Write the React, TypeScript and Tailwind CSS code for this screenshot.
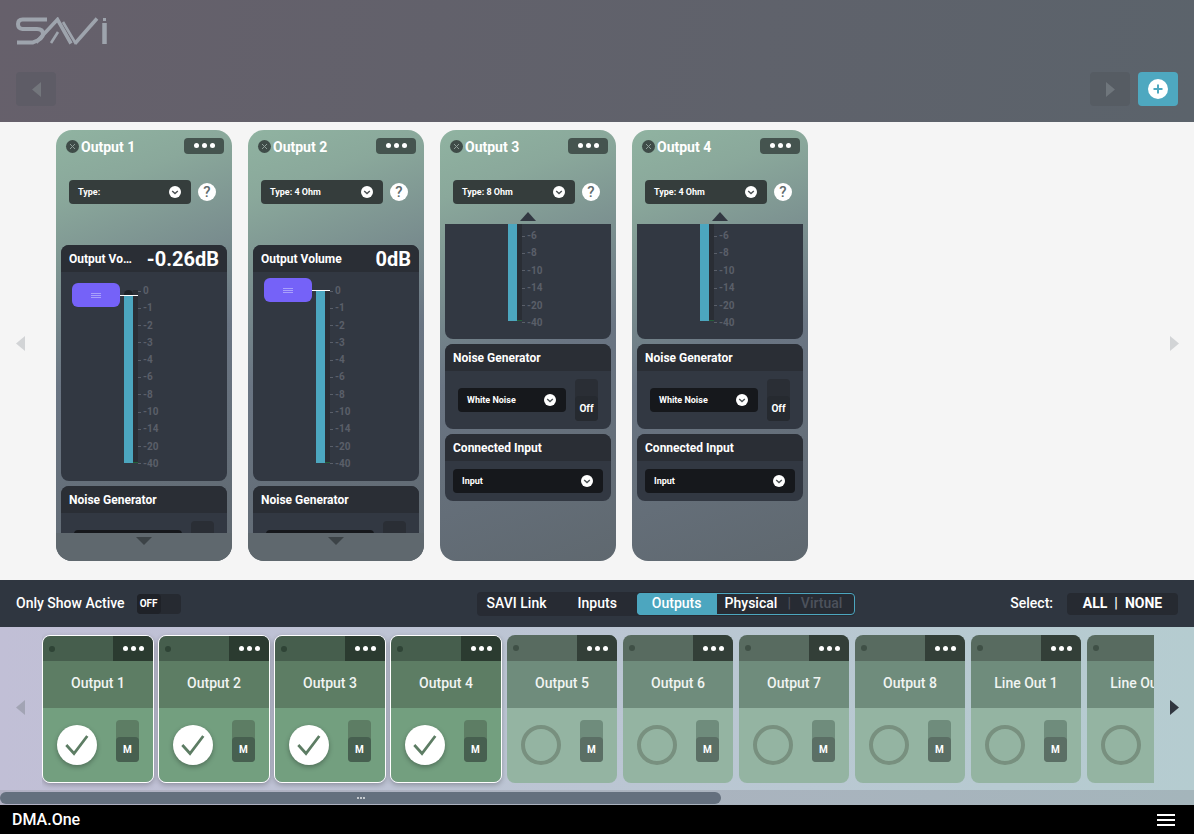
import React from "react";

const ticks = ["0", "-1", "-2", "-3", "-4", "-6", "-8", "-10", "-14", "-20", "-40"];
const scrolledTicks = ["-6", "-8", "-10", "-14", "-20", "-40"];

function Chevron({ size = 12 }: { size?: number }) {
  return (
    <svg width={size} height={size} viewBox="0 0 12 12" className="shrink-0">
      <circle cx="6" cy="6" r="6" fill="#fff" />
      <path d="M3.2 4.9 6 7.5l2.8-2.6" fill="none" stroke="#4a5053" strokeWidth="1.4" />
    </svg>
  );
}

function Dots() {
  return (
    <div className="flex gap-[3px]">
      <span className="w-[5px] h-[5px] rounded-full bg-white" />
      <span className="w-[5px] h-[5px] rounded-full bg-white" />
      <span className="w-[5px] h-[5px] rounded-full bg-white" />
    </div>
  );
}

function Tri({ dir, color, w = 10, h = 14 }: { dir: "l" | "r" | "u" | "d"; color: string; w?: number; h?: number }) {
  const pts = { l: `${w},0 ${w},${h} 0,${h / 2}`, r: `0,0 0,${h} ${w},${h / 2}`, u: `0,${h} ${w},${h} ${w / 2},0`, d: `0,0 ${w},0 ${w / 2},${h}` }[dir];
  return (
    <svg width={w} height={h} viewBox={`0 0 ${w} ${h}`} className="block shrink-0">
      <polygon points={pts} fill={color} />
    </svg>
  );
}

function PanelHead({ children }: { children: React.ReactNode }) {
  return (
    <div className="h-[27px] bg-[#2a2e35] px-2 flex items-center justify-between text-white text-[12px] font-bold whitespace-nowrap">
      {children}
    </div>
  );
}

function Scale({ labels }: { labels: string[] }) {
  return (
    <div className="flex flex-col justify-between h-full text-[10px] font-bold leading-[12px] text-[#5a5f69]">
      {labels.map((t) => (
        <div key={t} className="flex items-center gap-[2px] h-[12px]">
          <span className="w-[3px] h-px bg-[#5a5f69]" />
          <span>{t}</span>
        </div>
      ))}
    </div>
  );
}

function Noise() {
  return (
    <div className="rounded-lg overflow-hidden bg-[#323842]">
      <PanelHead>Noise Generator</PanelHead>
      <div className="h-[58px] flex items-start pl-[13px] pr-[13px]">
        <div className="mt-[17px] w-[108px] h-[24px] rounded bg-[#16181c] flex items-center justify-between pl-[9px] pr-[10px] text-white text-[9px] font-bold">
          <span className="pt-px">White Noise</span>
          <Chevron />
        </div>
        <div className="ml-[9px] mt-[8px] w-[23px] h-[42px] rounded bg-[#2a2e35] flex flex-col justify-end">
          <div className="h-[25px] rounded bg-[#262a30] flex items-center justify-center text-white text-[10px] font-bold">Off</div>
        </div>
      </div>
    </div>
  );
}

function OutputCard({ name, type, level, scrolled, value, top, cap }: { name: string; type: string; level: string; scrolled?: boolean; value?: string; top?: number; cap?: boolean }) {
  return (
    <div className="w-[176px] h-[431px] rounded-[16px] flex flex-col overflow-hidden bg-[linear-gradient(160deg,#90b3a1_0%,#8aa89b_14%,#6a7583_52%,#5f686f_100%)]">
      <div className="h-[32px] flex items-center pl-[10px] pr-[8px] pt-[1px]">
        <div className="w-[13px] h-[13px] rounded-full bg-[#3f4c48] flex items-center justify-center text-[#8f9e99]">
          <svg width="7" height="7" viewBox="0 0 7 7">
            <path d="M1 1l5 5M6 1 1 6" stroke="currentColor" strokeWidth="1" />
          </svg>
        </div>
        <span className="ml-[2px] pt-[1px] text-white text-[14px] font-bold whitespace-nowrap">{name}</span>
        <div className="ml-auto w-[40px] h-[16px] rounded bg-[#45544f] flex items-center justify-center -translate-y-[1px]">
          <Dots />
        </div>
      </div>
      <div className="mt-[18px] ml-[13px] flex items-center h-[24px]">
        <div className="w-[122px] h-[24px] rounded bg-[#353d3c] flex items-center justify-between pl-[9px] pr-[10px] text-white text-[9px] font-bold">
          <span className="pt-px">{type}</span>
          <Chevron />
        </div>
        <div className="ml-[7px] w-[18px] h-[18px] rounded-full bg-white flex items-center justify-center text-[#5f6a6c] text-[15px] font-medium">?</div>
      </div>
      <div className="h-[20px] flex items-end justify-center pb-[3px]">
        {scrolled && <Tri dir="u" color="#323842" w={16} h={9} />}
      </div>
      <div className="flex-1 min-h-0 overflow-hidden px-[5px]">
        <div className={scrolled ? "h-[115px] rounded-b-lg overflow-hidden bg-[#323842] relative" : "mt-[21px] h-[236px] rounded-lg overflow-hidden bg-[#323842]"}>
          {!scrolled && (
            <PanelHead>
              <span className="flex-1 min-w-0 truncate">Output Volume</span>
              <span className="ml-[14px] shrink-0 text-[20px] font-bold">{value}</span>
            </PanelHead>
          )}
          {scrolled ? (
            <div className="h-[97px] ml-[63px] flex">
              <div className="w-[9px] bg-[#4ca6bf]" />
              <div className="w-[5px] bg-[#2a2e35] flex flex-col justify-end">
                <div className="h-px bg-[#24603a]" />
              </div>
              <div className="h-[99px] mt-[6px]">
                <Scale labels={scrolledTicks} />
              </div>
            </div>
          ) : (
            <div className="relative h-[209px]">
              <div className="absolute left-[63px] top-[18px] w-[14px] h-[173px] flex">
                <div className={`w-[9px] h-full flex flex-col justify-end rounded-t-full ${cap ? "bg-[#1f2228]" : "bg-[#2a2e35]"}`}>
                  <div className="bg-[#4ca6bf]" style={{ height: level }} />
                </div>
                <div className="w-[5px] h-full bg-[#2a2e35] flex flex-col justify-end">
                  <div className="h-px bg-[#24603a]" />
                </div>
              </div>
              <div className="absolute left-[77px] top-[13px] h-[185px]">
                <Scale labels={ticks} />
              </div>
              <div className="absolute left-[59px] w-[18px] h-px bg-white" style={{ top: top! + 12 }} />
              <div className="absolute left-[11px] w-[48px] h-[24px] rounded-md bg-[#7562f8] flex flex-col items-center justify-center gap-[1px]" style={{ top }}>
                <span className="w-[10px] h-px bg-[#a9a0fb]" />
                <span className="w-[10px] h-px bg-[#a9a0fb]" />
                <span className="w-[10px] h-px bg-[#a9a0fb]" />
              </div>
            </div>
          )}
        </div>
        <div className="mt-[5px]">
          <Noise />
        </div>
        <div className="mt-[5px] rounded-lg overflow-hidden bg-[#323842]">
          <PanelHead>Connected Input</PanelHead>
          <div className="p-2">
            <div className="h-[24px] rounded bg-[#16181c] flex items-center justify-between pl-[9px] pr-[10px] text-white text-[9px] font-bold">
              <span className="pt-px">Input</span>
              <Chevron />
            </div>
          </div>
        </div>
      </div>
      {!scrolled && (
        <div className="h-[28px] bg-[#5f686e] flex justify-center pt-[4px]">
          <Tri dir="d" color="#3c4347" w={16} h={8} />
        </div>
      )}
    </div>
  );
}

function Tile({ name, active }: { name: string; active?: boolean }) {
  return (
    <div className={`w-[112px] h-[148px] shrink-0 ${active ? "" : "px-px"}`}>
      <div className={`h-full rounded-[8px] overflow-hidden flex flex-col ${active ? "border border-white shadow-[0_2px_5px_rgba(0,0,0,0.25)]" : ""}`}>
        <div className={`flex items-center justify-between shrink-0 ${active ? "h-[25px] bg-[#465e4d]" : "h-[26px] bg-[#586b60]"}`}>
          <span className={`ml-[6px] w-[6px] h-[6px] rounded-full ${active ? "bg-[#2f4436]" : "bg-[#3f5046]"}`} />
          <div className={`w-[40px] h-full flex items-center justify-center ${active ? "bg-[#2b3b30]" : "bg-[#333f38]"}`}>
            <Dots />
          </div>
        </div>
        <div className={`h-[47px] shrink-0 pb-[2px] flex items-center justify-center text-[14px] font-medium whitespace-nowrap text-[#f1f4f2] ${active ? "bg-[#5d7d64]" : "bg-[#6f8c7c]"}`}>
          {name}
        </div>
        <div className={`flex-1 relative flex items-start px-[14px] ${active ? "bg-[#739f7f]" : "bg-[#94b4a2]"}`}>
          {active ? (
            <div className="mt-[17px] w-[40px] h-[40px] rounded-full bg-white flex items-center justify-center shadow-[0_2px_5px_rgba(0,0,0,0.3)]">
              <svg width="24" height="24" viewBox="0 0 24 24">
                <path d="M1.300 12 9 20.500 22.300 3" fill="none" stroke="#5d7d64" strokeWidth="2.800" />
              </svg>
            </div>
          ) : (
            <div className="mt-[17px] w-[40px] h-[40px] rounded-full border-[4px] border-[#78907f]" />
          )}
          <div className={`ml-auto mt-[12px] w-[23px] h-[42px] rounded flex flex-col justify-end ${active ? "bg-[#5d7d64]" : "bg-[#6f8c7c]"}`}>
            <div className={`h-[25px] rounded flex items-center justify-center text-white text-[10px] font-bold ${active ? "bg-[#476050]" : "bg-[#5b6f65]"}`}>M</div>
          </div>
        </div>
      </div>
    </div>
  );
}

function Logo() {
  return (
    <svg width="91" height="28" viewBox="0 0 91 28" fill="none" stroke="#9ea4ad" className="block">
      <path d="M31 2.400H6.500Q2 2.400 2 7T6.500 12H21Q27 12 27 17T17 25.400H1" strokeWidth="4" />
      <path d="M20 25.500 41.500 2.500 55 26.500" strokeWidth="3.600" />
      <path d="M35 26 42 15M47 5 60 27" strokeWidth="2.600" />
      <path d="M59 26.500 81 1.500" strokeWidth="3.600" />
      <path d="M88.500 6V27" strokeWidth="4.500" />
      <path d="M88.500 1V4" strokeWidth="3" />
    </svg>
  );
}

const tiles = ["Output 1", "Output 2", "Output 3", "Output 4", "Output 5", "Output 6", "Output 7", "Output 8", "Line Out 1", "Line Out 2"];

export default function App() {
  return (
    <div className="w-[1194px] h-[834px] overflow-hidden flex flex-col font-['Roboto',sans-serif] bg-[#f5f5f5]">
      <header className="h-[122px] shrink-0 px-4 bg-[linear-gradient(100deg,#66606b_0%,#5b636b_100%)] flex flex-col">
        <div className="mt-[17px] h-[28px]">
          <Logo />
        </div>
        <div className="mt-[27px] flex items-center">
          <div className="w-[40px] h-[34px] rounded bg-[#5e5c66] flex items-center justify-center">
            <Tri dir="l" color="#73767c" w={9} h={15} />
          </div>
          <div className="ml-auto w-[40px] h-[34px] rounded bg-[#565c63] flex items-center justify-center">
            <Tri dir="r" color="#6f767c" w={9} h={15} />
          </div>
          <div className="ml-[8px] w-[40px] h-[34px] rounded bg-[#4ea8c0] flex items-center justify-center">
            <svg width="20" height="20" viewBox="0 0 20 20">
              <circle cx="10" cy="10" r="10" fill="#fff" />
              <path d="M10 5.500v9M5.500 10h9" stroke="#4ea8c0" strokeWidth="2" />
            </svg>
          </div>
        </div>
      </header>

      <main className="h-[458px] shrink-0 flex">
        <div className="w-[56px] flex items-center justify-center pr-[16px] pb-[16px]">
          <Tri dir="l" color="#d2d4d6" w={9} h={15} />
        </div>
        <div className="flex gap-4 pt-2 flex-1">
          <OutputCard name="Output 1" type="Type:" level="168px" value="-0.26dB" top={11} cap />
          <OutputCard name="Output 2" type="Type: 4 Ohm" level="172px" value="0dB" top={6} />
          <OutputCard name="Output 3" type="Type: 8 Ohm" level="" scrolled />
          <OutputCard name="Output 4" type="Type: 4 Ohm" level="" scrolled />
        </div>
        <div className="w-[40px] flex items-center justify-center pb-[16px]">
          <Tri dir="r" color="#d2d4d6" w={9} h={15} />
        </div>
      </main>

      <div className="h-[47px] shrink-0 bg-[#2f3640] flex items-center pl-4 pr-4 text-white text-[14px] font-medium whitespace-nowrap">
        <span>Only Show Active</span>
        <div className="ml-[12px] w-[44px] h-[20px] rounded bg-[#262a31] flex">
          <div className="w-[24px] h-full rounded bg-[#1f2228] flex items-center justify-center text-[10px] font-bold">OFF</div>
        </div>
        <div className="ml-[296px] w-[378px] h-[24px] rounded bg-[#272b33] flex items-center">
          <span className="ml-[10px] w-[61px]">SAVI Link</span>
          <span className="ml-[30px] w-[41px]">Inputs</span>
          <div className="ml-[18px] w-[218px] h-[22px] rounded border border-[#4ca6bf] flex items-center">
            <div className="w-[80px] -ml-px -my-px h-[22px] rounded-l bg-[#4ca6bf] flex items-center justify-center">Outputs</div>
            <span className="ml-[8px]">Physical</span>
            <span className="ml-[10px] text-[#4d525c]">|</span>
            <span className="ml-[10px] text-[#4d525c]">Virtual</span>
          </div>
        </div>
        <span className="ml-auto">Select:</span>
        <div className="ml-[14px] w-[111px] h-[22px] rounded bg-[#262a31] flex items-center justify-center font-bold gap-[7px]">
          <span>ALL</span>
          <span>|</span>
          <span>NONE</span>
        </div>
      </div>

      <div className="h-[163px] shrink-0 flex bg-[linear-gradient(90deg,#c1bfd6_0%,#b5ccd0_100%)]">
        <div className="w-[42px] flex items-center justify-center pb-[3px] pr-[2px]">
          <Tri dir="l" color="#a2a4b4" w={9} h={15} />
        </div>
        <div className="w-[1112px] flex gap-1 pt-2 overflow-hidden">
          {tiles.map((t, i) => (
            <Tile key={t} name={t} active={i < 4} />
          ))}
        </div>
        <div className="w-[40px] flex items-center justify-center pb-[3px]">
          <Tri dir="r" color="#30363f" w={9} h={15} />
        </div>
      </div>

      <div className="h-[15px] shrink-0 bg-[linear-gradient(90deg,#b2b1c4_0%,#a4b5bb_100%)] flex items-center">
        <div className="w-[721px] h-[12px] rounded-full bg-[#64707e] flex items-center justify-center gap-[1px]">
          <span className="w-[2px] h-[2px] bg-[#c4c9ce]" />
          <span className="w-[2px] h-[2px] bg-[#c4c9ce]" />
          <span className="w-[2px] h-[2px] bg-[#c4c9ce]" />
        </div>
      </div>

      <footer className="h-[29px] shrink-0 bg-black flex items-center justify-between pl-3 pr-[19px]">
        <span className="text-white text-[16px] font-medium">DMA.One</span>
        <div className="flex flex-col gap-[3px]">
          <span className="w-[18px] h-[2px] bg-white" />
          <span className="w-[18px] h-[2px] bg-white" />
          <span className="w-[18px] h-[2px] bg-white" />
        </div>
      </footer>
    </div>
  );
}
